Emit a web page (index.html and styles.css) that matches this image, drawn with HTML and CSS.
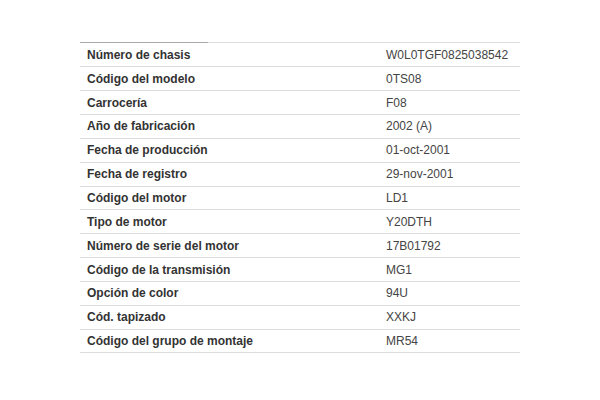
FILE: index.html
```html
<!DOCTYPE html>
<html lang="es">
<head>
<meta charset="utf-8">
<link rel="stylesheet" href="styles.css">
</head>
<body>
<div class="wrap">
  <div class="topline"><span class="accent"></span></div>
  <table class="spec">
    <tbody>
      <tr><th>Número de chasis</th><td>W0L0TGF0825038542</td></tr>
      <tr><th>Código del modelo</th><td>0TS08</td></tr>
      <tr><th>Carrocería</th><td>F08</td></tr>
      <tr><th>Año de fabricación</th><td>2002 (A)</td></tr>
      <tr><th>Fecha de producción</th><td>01-oct-2001</td></tr>
      <tr><th>Fecha de registro</th><td>29-nov-2001</td></tr>
      <tr><th>Código del motor</th><td>LD1</td></tr>
      <tr><th>Tipo de motor</th><td>Y20DTH</td></tr>
      <tr><th>Número de serie del motor</th><td>17B01792</td></tr>
      <tr><th>Código de la transmisión</th><td>MG1</td></tr>
      <tr><th>Opción de color</th><td>94U</td></tr>
      <tr><th>Cód. tapizado</th><td>XXKJ</td></tr>
      <tr><th>Código del grupo de montaje</th><td>MR54</td></tr>
    </tbody>
  </table>
</div>
</body>
</html>
```

FILE: styles.css
```css
html, body {
  margin: 0;
  padding: 0;
  background: #fff;
}
body {
  font-family: "Liberation Sans", Arial, sans-serif;
}
.wrap {
  width: 440px;
  margin: 42px 0 0 80px;
}
.topline {
  height: 1px;
  background: #dedede;
  display: flex;
}
.accent {
  width: 128px;
  background: #a8a8a8;
}
.spec {
  width: 100%;
  border-collapse: collapse;
  font-size: 12px;
}
.spec tr {
  height: 23.85px;
  border-bottom: 1px solid #dcdcdc;
}
.spec th {
  text-align: left;
  font-weight: bold;
  color: #333;
  padding: 0 0 0 7px;
  width: 292px;
}
.spec td {
  color: #444;
  padding: 0 0 0 7px;
}
```
